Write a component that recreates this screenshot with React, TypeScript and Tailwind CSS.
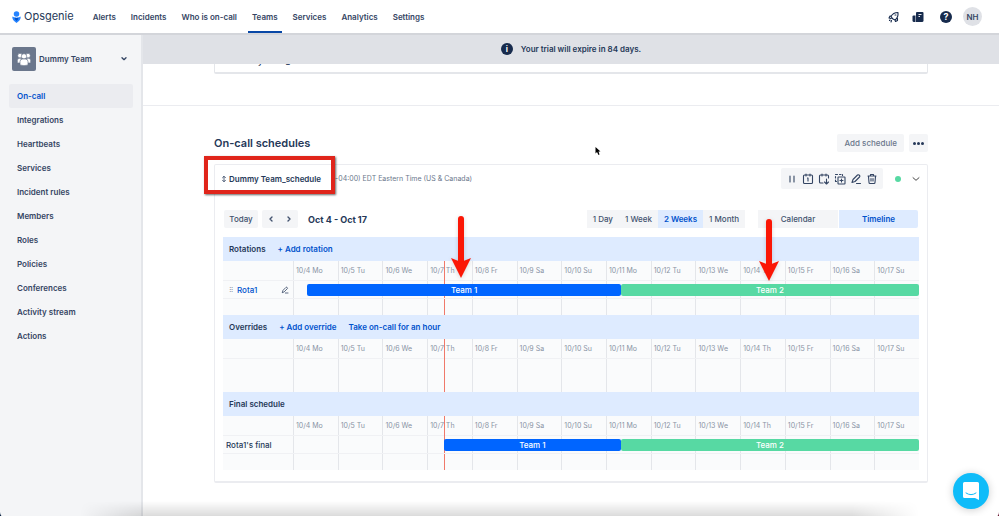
import type { ReactNode } from "react";

const navItems = ["Alerts", "Incidents", "Who is on-call", "Teams", "Services", "Analytics", "Settings"];

const sideItems = [
	"On-call",
	"Integrations",
	"Heartbeats",
	"Services",
	"Incident rules",
	"Members",
	"Roles",
	"Policies",
	"Conferences",
	"Activity stream",
	"Actions",
];

const days = [
	"10/4 Mo",
	"10/5 Tu",
	"10/6 We",
	"10/7 Th",
	"10/8 Fr",
	"10/9 Sa",
	"10/10 Su",
	"10/11 Mo",
	"10/12 Tu",
	"10/13 We",
	"10/14 Th",
	"10/15 Fr",
	"10/16 Sa",
	"10/17 Su",
];

const periods = ["1 Day", "1 Week", "2 Weeks", "1 Month"];

// positions on the timeline, in percent of the two weeks
const NOW = 24.1;
const HANDOVER = 52.4;

type Shift = { team: string; from: number; to: number; color: string };

const rotaShifts: Shift[] = [
	{ team: "Team 1", from: 2.3, to: HANDOVER, color: "bg-[#0065ff]" },
	{ team: "Team 2", from: HANDOVER, to: 100, color: "bg-[#57d9a3]" },
];

const finalShifts: Shift[] = [
	{ team: "Team 1", from: NOW, to: HANDOVER, color: "bg-[#0065ff]" },
	{ team: "Team 2", from: HANDOVER, to: 100, color: "bg-[#57d9a3]" },
];

const Icon = ({ children, className = "size-3" }: { children: ReactNode; className?: string }) => (
	<svg
		viewBox="0 0 24 24"
		fill="none"
		stroke="currentColor"
		strokeWidth="2.2"
		strokeLinecap="round"
		strokeLinejoin="round"
		className={`shrink-0 ${className}`}
		aria-hidden="true"
	>
		{children}
	</svg>
);

const PencilIcon = ({ className }: { className?: string }) => (
	<Icon className={className}>
		<path d="M4 19l2-6 9-9q1.500-1 3 0l1 1q1.500 1.500 0 3l-9 9zM13 21h8" />
	</Icon>
);

const Header = () => (
	<header className="flex h-[35px] items-center border-b-2 border-[#d3d5da] bg-white pl-3 pr-[17px]">
		<a href="#" className="flex items-center gap-[3px] text-[11px] text-[#253858]">
			<svg viewBox="0 0 18 24" className="h-3 w-[9px]" aria-hidden="true">
				<circle cx="9" cy="6" r="5.500" fill="#2684ff" />
				<path d="M1 11q8 5 16 0q2 6-8 13Q-1 17 1 11z" fill="#2684ff" />
				<path d="M5 13q4 1.500 8 0q0 4-4 7q-4-3-4-7z" fill="#0052cc" />
			</svg>
			Opsgenie
		</a>
		<nav className="ml-[15px] flex h-full gap-[7px]">
			{navItems.map((item) => (
				<a
					key={item}
					href="#"
					className={`flex h-full items-center border-y-2 border-t-transparent px-1 text-[8px] font-semibold text-[#344563] ${
						item === "Teams" ? "border-b-[#0747a6]" : "border-b-transparent"
					}`}
				>
					{item}
				</a>
			))}
		</nav>
		<div className="ml-auto flex items-center text-[#172b4d]">
			<button aria-label="What's new">
				<Icon>
					<path d="M8 14L6 11q4-8 14-8 1 10-6 15l-4-2zM7 10H4l-2 4 4 1M14 18l1 3 4-2v-4M14 8l2 0M4 18l-1 1M7 19l-1 3" />
				</Icon>
			</button>
			<button aria-label="Product updates" className="ml-3">
				<svg viewBox="0 0 24 24" fill="currentColor" className="size-3" aria-hidden="true">
					<path d="M8 4q0-2 2-2h11q2 0 2 2v15q0 3-3 3H8z" />
					<path d="M1 11q0-2 2-2h4v13H4q-3 0-3-3z" />
					<path d="M13 7h6M13 11h3" stroke="white" strokeWidth="1.800" />
				</svg>
			</button>
			<button
				aria-label="Help"
				className="ml-4 flex size-3 items-center justify-center rounded-full bg-[#172b4d] text-[9px] font-bold text-white"
			>
				?
			</button>
			<button className="ml-[11px] flex size-[19px] items-center justify-center rounded-full bg-[#dfe1e6] text-[8px] font-semibold text-[#344563]">
				NH
			</button>
		</div>
	</header>
);

const Sidebar = () => (
	<aside className="w-[143px] shrink-0 border-r-2 border-[#e4e6ea] bg-[#f4f5f7] px-[9px] pt-3 text-[8px] font-semibold text-[#344563]">
		<button className="flex w-full items-center gap-[3px] pl-[3px] pr-1">
			<span className="flex size-6 items-center justify-center rounded-xs bg-[#6b778c]">
				<svg viewBox="0 0 24 24" fill="white" stroke="#6b778c" strokeWidth="1" className="size-4" aria-hidden="true">
					<circle cx="6" cy="7" r="3.500" />
					<circle cx="18" cy="7" r="3.500" />
					<path d="M2 18v-4q0-3 3-3h3v7zM22 18v-4q0-3-3-3h-3v7z" />
					<circle cx="12" cy="8" r="4" />
					<path d="M6 21v-5q0-4 4-4h4q4 0 4 4v5q-6 2-12 0z" />
				</svg>
			</span>
			Dummy Team
			<Icon className="ml-auto size-2">
				<path d="M6 8l6 6 6-6" strokeWidth="4" />
			</Icon>
		</button>
		<nav className="mt-[13px]">
			{sideItems.map((item) => (
				<a
					key={item}
					href="#"
					className={`flex h-6 w-[124px] items-center rounded-xs px-2 ${
						item === "On-call" ? "bg-[#ebecf0] text-[#0052cc]" : ""
					}`}
				>
					{item}
				</a>
			))}
		</nav>
	</aside>
);

const ScheduleHead = () => (
	<div className="flex h-[27px] items-center pl-[6px] pr-[7px]">
		<div className="relative flex items-center gap-[2px] text-[8px] font-semibold text-[#253858]">
			<Icon className="h-2 w-[6px]">
				<path d="M12 2v20M6 7l6-6 6 6M6 17l6 6 6-6" strokeWidth="3" />
			</Icon>
			Dummy Team_schedule
			<div className="absolute -bottom-[11px] -left-[17px] -right-[14px] -top-[19px] border-4 border-[#e0251b] shadow-[1px_1px_2px_rgba(0,0,0,0.6)]" />
		</div>
		<span className="ml-[14px] text-[7px] text-[#6b778c]">-04:00) EDT Eastern Time (US &amp; Canada)</span>
		<div className="ml-auto flex h-[21px] items-center gap-1 rounded-xs bg-[#f4f5f7] px-[5px] text-[#344563]">
			<button aria-label="Disable">
				<Icon>
					<path d="M8 6v12M16 6v12" />
				</Icon>
			</button>
			<button aria-label="Calendar">
				<Icon>
					<rect x="3" y="4" width="18" height="17" rx="2" />
					<path d="M8 2v4M16 2v4M11 10h1v6" />
				</Icon>
			</button>
			<button aria-label="Export">
				<Icon>
					<path d="M10 20H5q-2 0-2-2V6q0-2 2-2h14q2 0 2 2v4M8 2v4M16 2v4M17 12v9M13 18l4 4 4-4" />
				</Icon>
			</button>
			<button aria-label="Clone">
				<Icon>
					<path d="M5 17H3v-3M3 10V7M3 3h4M11 3h3M17 3v2" />
					<rect x="8" y="8" width="14" height="14" rx="1" />
					<path d="M15 12v6M12 15h6" />
				</Icon>
			</button>
			<button aria-label="Edit">
				<PencilIcon />
			</button>
			<button aria-label="Delete">
				<Icon>
					<path d="M4 6h16M9 5V3h6v2M5 7l1 12q0 2 2 2h8q2 0 2-2l1-12M10 11v5M14 11v5" />
				</Icon>
			</button>
		</div>
		<span className="ml-3 size-[6px] rounded-full bg-[#57d9a3]" />
		<button aria-label="Collapse" className="ml-[11px]">
			<Icon className="size-2">
				<path d="M3 8l9 8 9-8" />
			</Icon>
		</button>
	</div>
);

const Toolbar = () => (
	<div className="mt-[18px] flex h-[18px] items-stretch px-[9px] text-[8px] font-medium text-[#42526e]">
		<button className="w-[34px] rounded-xs bg-[#f4f5f7]">Today</button>
		<div className="ml-1 flex w-9 rounded-xs bg-[#f4f5f7]">
			<button aria-label="Previous" className="flex flex-1 items-center justify-center">
				<Icon className="size-2">
					<path d="M15 6l-6 6 6 6" strokeWidth="4" />
				</Icon>
			</button>
			<button aria-label="Next" className="flex flex-1 items-center justify-center">
				<Icon className="size-2">
					<path d="M9 6l6 6-6 6" strokeWidth="4" />
				</Icon>
			</button>
		</div>
		<h3 className="ml-[10px] self-center text-[9px] font-bold text-[#253858]">Oct 4 - Oct 17</h3>
		<div className="ml-auto flex">
			{periods.map((period) => (
				<button
					key={period}
					className={`px-[6px] ${period === "2 Weeks" ? "bg-[#deebff] font-semibold text-[#0052cc]" : "bg-[#f4f5f7]"}`}
				>
					{period}
				</button>
			))}
		</div>
		<div className="ml-[13px] flex gap-px">
			<button className="w-20 bg-[#f4f5f7]">Calendar</button>
			<button className="w-[79px] rounded-r-xs bg-[#deebff] font-semibold text-[#0052cc]">Timeline</button>
		</div>
	</div>
);

const SectionTitle = ({ title, links = [] }: { title: string; links?: string[] }) => (
	<div className="flex h-6 items-center gap-3 bg-[#deebff] px-[6px] text-[8px] font-semibold text-[#253858]">
		<h4>{title}</h4>
		{links.map((link) => (
			<a key={link} href="#" className="text-[#0052cc]">
				{link}
			</a>
		))}
	</div>
);

const Timeline = ({ label, shifts, tail }: { label?: ReactNode; shifts?: Shift[]; tail: string }) => (
	<div className="flex bg-[#fafbfc]">
		<div className="w-[70px] shrink-0">
			<div className="h-5 border-b border-[#f0f1f4]" />
			{label && <div className="flex h-[18px] items-center border-b border-[#f0f1f4]">{label}</div>}
		</div>
		<div className="relative flex-1">
			<div className="absolute inset-0 grid grid-cols-14">
				{days.map((day) => (
					<div key={day} className="border-l border-[#e4e6ea]" />
				))}
			</div>
			<div className="relative grid h-5 grid-cols-14 items-center border-b border-[#f0f1f4] pb-px text-[7px] text-[#8993a4]">
				{days.map((day) => (
					<span key={day} className="whitespace-nowrap pl-[3px]">
						{day}
					</span>
				))}
			</div>
			<div className="absolute inset-y-0 w-px bg-[#f0796a]" style={{ left: `${NOW}%` }} />
			{shifts && (
				<div className="relative flex h-[18px] items-center border-b border-[#f0f1f4]">
					{shifts.map((shift, idx) => (
						<div
							key={shift.team}
							className={`flex h-3 items-center justify-center rounded-xs text-[8px] font-medium text-white ${shift.color}`}
							style={{ width: `${shift.to - shift.from}%`, marginLeft: idx === 0 ? `${shift.from}%` : 0 }}
						>
							{shift.team}
						</div>
					))}
				</div>
			)}
			<div className={tail} />
		</div>
	</div>
);

const Arrow = ({ className }: { className: string }) => (
	<svg viewBox="0 0 22 64" className={`pointer-events-none absolute h-16 w-[22px] drop-shadow-sm ${className}`} aria-hidden="true">
		<path d="M11 4v46" stroke="#fb1706" strokeWidth="6" strokeLinecap="round" />
		<path d="M1 43l10 4 10-4-10 20z" fill="#fb1706" />
	</svg>
);

export default function App() {
	return (
		<div className="relative flex min-h-screen flex-col overflow-hidden bg-white font-['Inter',sans-serif] leading-none">
			<Header />
			<div className="flex flex-1">
				<Sidebar />
				<main className="min-w-0 flex-1 pb-[34px]">
					<div className="sticky top-0 z-10 flex h-[29px] items-center justify-center gap-2 bg-[#dfe1e6] pb-[2px] text-[8px] font-semibold text-[#253858]">
						<span className="flex size-3 items-center justify-center rounded-full bg-[#172b4d] text-[8px] font-bold text-white">
							i
						</span>
						Your trial will expire in 84 days.
					</div>
					<div className="mx-[71px] -mt-4 flex h-[26px] flex-col justify-end rounded-b-xs border-x border-b-2 border-[#e4e6ea] pb-[7px] pl-[18px] text-[8px] font-semibold text-[#253858]">
						Dummy Team_schedule
					</div>
					<div className="mt-[31px] border-t border-[#ebecf0]" />

					<div className="mx-[71px] mt-[28px] flex items-center">
						<h2 className="text-[11px] font-semibold text-[#253858]">On-call schedules</h2>
						<button className="ml-auto h-[18px] rounded-xs bg-[#f4f5f7] px-[7px] text-[8px] font-medium text-[#6b778c]">
							Add schedule
						</button>
						<button aria-label="More" className="ml-[5px] flex h-[18px] w-[19px] items-center justify-center gap-px rounded-xs bg-[#f4f5f7]">
							<span className="size-[3px] rounded-full bg-[#253858]" />
							<span className="size-[3px] rounded-full bg-[#253858]" />
							<span className="size-[3px] rounded-full bg-[#253858]" />
						</button>
					</div>

					<section className="mx-[71px] mt-3 rounded-xs border border-b-2 border-[#ebecf0] pb-[11px]">
						<ScheduleHead />
						<Toolbar />
						<div className="mx-2 mt-[9px]">
							<SectionTitle title="Rotations" links={["+ Add rotation"]} />
							<Timeline
								label={
									<>
										<span className="ml-[6px] text-[6px] text-[#6b778c]">⠿</span>
										<a href="#" className="ml-1 text-[8px] font-medium text-[#0052cc]">
											Rota1
										</a>
										<button aria-label="Edit rotation" className="ml-auto mr-1 text-[#253858]">
											<PencilIcon className="size-2" />
										</button>
									</>
								}
								shifts={rotaShifts}
								tail="h-4"
							/>
							<SectionTitle title="Overrides" links={["+ Add override", "Take on-call for an hour"]} />
							<Timeline tail="h-[33px]" />
							<SectionTitle title="Final schedule" />
							<Timeline
								label={<span className="ml-[3px] text-[8px] font-medium text-[#253858]">Rota1's final</span>}
								shifts={finalShifts}
								tail="h-4"
							/>
						</div>
					</section>
				</main>
			</div>

			<Arrow className="left-[450px] top-[215px]" />
			<Arrow className="left-[758px] top-[218px]" />

			<svg viewBox="0 0 12 18" className="pointer-events-none absolute left-[595px] top-[146px] h-[10px] w-[6px]" aria-hidden="true">
				<path d="M1 1v13l3-3 3 6 2-1-2-6h4z" fill="black" />
			</svg>

			<div className="pointer-events-none absolute inset-x-[80px] bottom-0 h-4 bg-linear-to-t from-black/15 to-transparent [mask-image:linear-gradient(to_right,transparent,black_8%,black_92%,transparent)]" />

			<button
				aria-label="Open chat"
				className="absolute bottom-2 right-[10px] flex size-9 items-center justify-center rounded-full bg-[#0fbcf9] shadow-[0_1px_8px_rgba(0,0,0,0.2)]"
			>
				<svg viewBox="0 0 18 20" className="h-5 w-[18px]" aria-hidden="true">
					<path d="M2.500 1h13q1.500 0 1.500 1.500V19l-4-2H2.500Q1 17 1 15.500v-13Q1 1 2.500 1z" fill="white" />
					<path d="M4 12q5 3.500 10 0" stroke="#0fbcf9" strokeWidth="1" fill="none" strokeLinecap="round" />
				</svg>
			</button>
			<svg viewBox="0 0 5 5" className="absolute bottom-0 left-0 size-[5px]" aria-hidden="true">
				<path d="M0 0q0 5 5 5H0z" fill="#0b2344" />
			</svg>
			<svg viewBox="0 0 5 5" className="absolute bottom-0 right-0 size-[5px]" aria-hidden="true">
				<path d="M5 0q0 5-5 5h5z" fill="#6b1733" />
			</svg>
		</div>
	);
}
